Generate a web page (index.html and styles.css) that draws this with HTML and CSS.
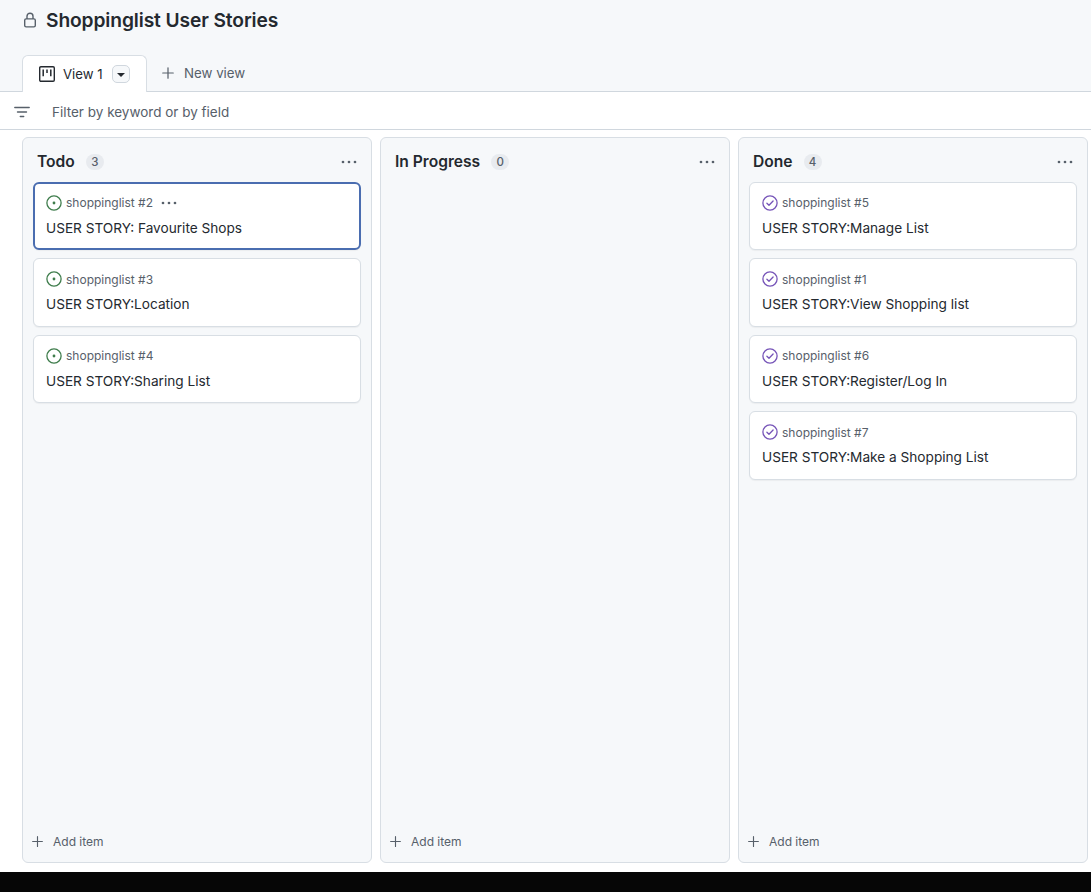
FILE: index.html
```html
<!DOCTYPE html>
<html lang="en">
<head>
	<meta charset="UTF-8">
	<title>Shoppinglist User Stories</title>
	<link rel="stylesheet" href="styles.css">
</head>
<body>
	<svg class="defs" width="0" height="0">
		<symbol id="i-open" viewBox="0 0 16 16">
			<circle cx="8" cy="8" r="7.1" fill="none" stroke="#3f7d4c" stroke-width="1.3"/>
			<circle cx="8" cy="8" r="1.4" fill="#3f7d4c"/>
		</symbol>
		<symbol id="i-done" viewBox="0 0 16 16">
			<circle cx="8" cy="8" r="7.1" fill="none" stroke="#7654b8" stroke-width="1.3"/>
			<path d="M4.9 8.2 7 10.3 11.1 6" fill="none" stroke="#7654b8" stroke-width="1.3" stroke-linecap="round" stroke-linejoin="round"/>
		</symbol>
		<symbol id="i-plus" viewBox="0 0 16 16">
			<path d="M8 2v12M2 8h12" fill="none" stroke="#57606a" stroke-width="1.4" stroke-linecap="round"/>
		</symbol>
		<symbol id="i-more" viewBox="0 0 16 16">
			<circle cx="2" cy="8" r="1.35" fill="#57606a"/>
			<circle cx="8" cy="8" r="1.35" fill="#57606a"/>
			<circle cx="14" cy="8" r="1.35" fill="#57606a"/>
		</symbol>
	</svg>

	<header class="title-row">
		<svg class="lock" viewBox="0 0 16 16" width="16" height="16">
			<path d="M5 7V4.2a3 3 0 0 1 6 0V7" fill="none" stroke="#57606a" stroke-width="1.4"/>
			<rect x="2.7" y="6.9" width="10.6" height="8" rx="1.4" fill="none" stroke="#57606a" stroke-width="1.4"/>
		</svg>
		<h1>Shoppinglist User Stories</h1>
	</header>

	<nav class="tabs">
		<div class="tab">
			<svg class="tab-icon" viewBox="0 0 16 16" width="16" height="16">
				<rect x="0.7" y="0.7" width="14.6" height="14.6" rx="1.2" fill="none" stroke="#24292f" stroke-width="1.4"/>
				<path d="M4.2 3.4v6.8M8 3.4v3.6M11.8 3.4v6.8" fill="none" stroke="#24292f" stroke-width="1.5"/>
			</svg>
			<span>View 1</span>
			<span class="caret-btn"><i class="caret"></i></span>
		</div>
		<div class="new-view">
			<svg width="14" height="14"><use href="#i-plus"/></svg>
			<span>New view</span>
		</div>
	</nav>

	<div class="filter-bar">
		<svg class="filter-icon" viewBox="0 0 16 16" width="16" height="16">
			<path d="M.8 3.5h14.4M3.5 8h9M6.3 12.5h3.4" fill="none" stroke="#57606a" stroke-width="1.4" stroke-linecap="round"/>
		</svg>
		<span>Filter by keyword or by field</span>
	</div>

	<main class="board">
		<section class="column">
			<div class="col-head">
				<h2>Todo</h2>
				<span class="count">3</span>
				<svg class="col-more" width="16" height="16"><use href="#i-more"/></svg>
			</div>
			<div class="cards">
				<article class="card selected">
					<div class="card-meta">
						<svg width="16" height="16"><use href="#i-open"/></svg>
						<span>shoppinglist #2</span>
						<svg class="card-more" width="16" height="16"><use href="#i-more"/></svg>
					</div>
					<p>USER STORY: Favourite Shops</p>
				</article>
				<article class="card">
					<div class="card-meta">
						<svg width="16" height="16"><use href="#i-open"/></svg>
						<span>shoppinglist #3</span>
					</div>
					<p>USER STORY:Location</p>
				</article>
				<article class="card">
					<div class="card-meta">
						<svg width="16" height="16"><use href="#i-open"/></svg>
						<span>shoppinglist #4</span>
					</div>
					<p>USER STORY:Sharing List</p>
				</article>
			</div>
			<div class="add-item">
				<svg width="14" height="14"><use href="#i-plus"/></svg>
				<span>Add item</span>
			</div>
		</section>

		<section class="column">
			<div class="col-head">
				<h2>In Progress</h2>
				<span class="count">0</span>
				<svg class="col-more" width="16" height="16"><use href="#i-more"/></svg>
			</div>
			<div class="cards"></div>
			<div class="add-item">
				<svg width="14" height="14"><use href="#i-plus"/></svg>
				<span>Add item</span>
			</div>
		</section>

		<section class="column">
			<div class="col-head">
				<h2>Done</h2>
				<span class="count">4</span>
				<svg class="col-more" width="16" height="16"><use href="#i-more"/></svg>
			</div>
			<div class="cards">
				<article class="card">
					<div class="card-meta">
						<svg width="16" height="16"><use href="#i-done"/></svg>
						<span>shoppinglist #5</span>
					</div>
					<p>USER STORY:Manage List</p>
				</article>
				<article class="card">
					<div class="card-meta">
						<svg width="16" height="16"><use href="#i-done"/></svg>
						<span>shoppinglist #1</span>
					</div>
					<p>USER STORY:View Shopping list</p>
				</article>
				<article class="card">
					<div class="card-meta">
						<svg width="16" height="16"><use href="#i-done"/></svg>
						<span>shoppinglist #6</span>
					</div>
					<p>USER STORY:Register/Log In</p>
				</article>
				<article class="card">
					<div class="card-meta">
						<svg width="16" height="16"><use href="#i-done"/></svg>
						<span>shoppinglist #7</span>
					</div>
					<p>USER STORY:Make a Shopping List</p>
				</article>
			</div>
			<div class="add-item">
				<svg width="14" height="14"><use href="#i-plus"/></svg>
				<span>Add item</span>
			</div>
		</section>
	</main>

	<div class="backdrop"></div>
</body>
</html>
```

FILE: styles.css
```css
*{margin: 0;padding: 0;box-sizing: border-box}
html,body{height: 100%}
body{
	width: 1091px;
	height: 892px;
	overflow: hidden;
	display: flex;
	flex-direction: column;
	background: #f6f8fa;
	color: #24292f;
	font-family: Inter, "Liberation Sans", sans-serif;
}
.defs{display: block;height: 0}

.title-row{
	height: 40px;
	padding-left: 22px;
	display: flex;
	align-items: center;
	gap: 8px;
}
.title-row h1{
	font-size: 19.2px;
	font-weight: 600;
	line-height: 24px;
	letter-spacing: -0.1px;
}

.tabs{
	height: 52px;
	padding: 15px 0 0 22px;
	display: flex;
	border-bottom: 1px solid #d0d7de;
}
.tab{
	width: 125px;
	height: 37px;
	margin-bottom: -1px;
	padding-left: 16px;
	display: flex;
	align-items: center;
	gap: 8px;
	background: #fff;
	border: 1px solid #d8dee4;
	border-bottom: 0;
	border-radius: 6px 6px 0 0;
	font-size: 13.2px;
}
.caret-btn{
	width: 18px;
	height: 18px;
	margin-left: 1px;
	display: flex;
	align-items: center;
	justify-content: center;
	border: 1px solid #d0d7de;
	border-radius: 5px;
	background: #f6f8fa;
}
.caret{
	border-top: 4px solid #24292f;
	border-left: 4px solid transparent;
	border-right: 4px solid transparent;
	margin-top: 1px;
}
.new-view{
	padding-left: 14px;
	display: flex;
	align-items: center;
	gap: 9px;
	font-size: 13.3px;
	color: #57606a;
}

.filter-bar{
	height: 38px;
	padding: 2px 0 0 14px;
	display: flex;
	align-items: center;
	gap: 22px;
	background: #fff;
	border-bottom: 1px solid #d0d7de;
	font-size: 13.5px;
	color: #57606a;
}

.board{
	height: 742px;
	padding: 7px 3px 9px 22px;
	display: flex;
	gap: 8px;
	background: #fff;
}
.column{
	width: 350px;
	display: flex;
	flex-direction: column;
	background: #f6f8fa;
	border: 1px solid #d8dee4;
	border-radius: 6px;
}
.col-head{
	height: 43.6px;
	padding: 4px 14px 0 14px;
	display: flex;
	align-items: center;
	gap: 11px;
}
.col-head h2{
	font-size: 15.6px;
	font-weight: 600;
}
.count{
	min-width: 18px;
	height: 16px;
	display: flex;
	align-items: center;
	justify-content: center;
	border-radius: 9px;
	background: #e8ebef;
	font-size: 11.5px;
	font-weight: 500;
	color: #57606a;
}
.col-more{margin-left: auto}

.cards{
	flex: 1;
	padding: 0 10px;
	display: flex;
	flex-direction: column;
	gap: 8px;
}
.card{
	height: 68.5px;
	padding: 12px 12px 0;
	background: #fff;
	border: 1px solid #d8dee4;
	border-radius: 6px;
	box-shadow: 0 1px 1px rgba(31,35,40,0.05);
}
.card.selected{
	border: 2px solid #4a6db0;
	padding: 11px 11px 0;
}
.card-meta{
	height: 16px;
	display: flex;
	align-items: center;
	gap: 4px;
	font-size: 12px;
	color: #57606a;
}
.card-more{margin-left: 4px;width: 16px;height: 16px}
.card p{
	margin-top: 6px;
	font-size: 13.65px;
	line-height: 22px;
	color: #24292f;
}

.add-item{
	height: 42px;
	padding-left: 8px;
	display: flex;
	align-items: center;
	gap: 9px;
	font-size: 12px;
	color: #57606a;
}
.add-item svg{width: 13px;height: 13px}

.backdrop{
	flex: 1;
	background: #060606;
}
```
